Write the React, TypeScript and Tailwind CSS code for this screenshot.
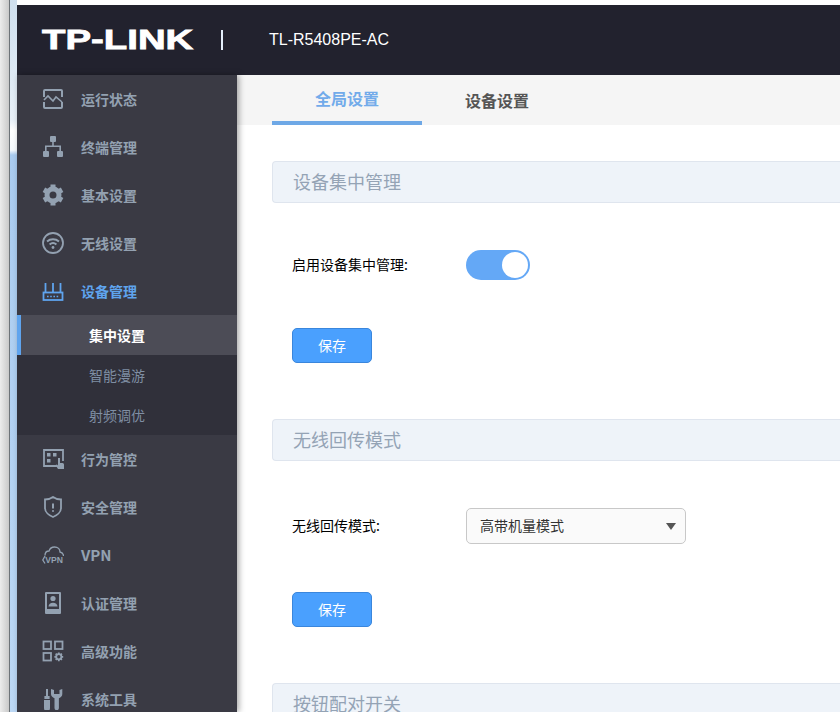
import type { ReactNode } from 'react';

const ico = 'w-[22px] h-[22px] shrink-0';

const StatusIcon = () => (
  <svg viewBox="0 0 22 22" className={ico} fill="none" stroke="currentColor" strokeWidth="2">
    <path d="M2 9V3a1 1 0 0 1 1-1h16a1 1 0 0 1 1 1v6M2 14v5a1 1 0 0 0 1 1h16a1 1 0 0 0 1-1v-5" />
    <path d="M2 12l4-4 5 5 3-4 6 5" strokeWidth="1.6" />
  </svg>
);

const TreeIcon = () => (
  <svg viewBox="0 0 22 22" className={ico} fill="currentColor">
    <rect x="8" y="0" width="6" height="6" rx="1" />
    <rect x="1" y="15" width="6" height="6" rx="1" />
    <rect x="15" y="15" width="6" height="6" rx="1" />
    <path d="M10.200 6h1.600v3.400H19V15h-1.600v-4H4.600v4H3V9.400h7.200z" />
  </svg>
);

const GearIcon = () => (
  <svg viewBox="0 0 22 22" className={ico} fill="none" stroke="currentColor">
    <circle cx="11" cy="11" r="6" strokeWidth="5" />
    <path d="M11 0.500v4M11 17.500v4M1.900 5.750l3.500 2M16.600 14.250l3.500 2M1.900 16.250l3.500-2M16.600 7.750l3.500-2" strokeWidth="5" />
  </svg>
);

const WifiIcon = () => (
  <svg viewBox="0 0 22 22" className={ico} fill="none" stroke="currentColor" strokeWidth="1.800">
    <circle cx="11" cy="11" r="10" />
    <path d="M5 9.500c3.500-3 8.500-3 12 0M7.600 12.400c2-1.700 4.800-1.700 6.800 0" strokeWidth="2" />
    <circle cx="11" cy="15.500" r="1.400" fill="currentColor" stroke="none" />
  </svg>
);

const RouterIcon = () => (
  <svg viewBox="0 0 22 22" className={ico} fill="none" stroke="currentColor" strokeWidth="1.800">
    <rect x="1.500" y="12.500" width="19" height="7.500" />
    <path d="M3.500 12.500V3M11 12.500V3M18.500 12.500V3" />
    <path d="M5 16.500h1.600M8.200 16.500h1.600M11.400 16.500h1.600M14.600 16.500h1.600" strokeWidth="1.500" />
  </svg>
);

const BehaviorIcon = () => (
  <svg viewBox="0 0 22 22" className={ico} fill="none" stroke="currentColor" strokeWidth="1.800">
    <path d="M15 18H2V2h19v11" />
    <g fill="currentColor" stroke="none">
      <rect x="5" y="5" width="3.500" height="3.500" />
      <rect x="11" y="5" width="3.500" height="3.500" />
      <rect x="5" y="11" width="3.500" height="3.500" />
      <path d="M16 10h2v5h2.500a1.500 1.500 0 0 1 1.500 1.500V21h-6l-2.500-4 1.500-.5 1 1z" />
    </g>
  </svg>
);

const ShieldIcon = () => (
  <svg viewBox="0 0 22 22" className={ico} fill="none" stroke="currentColor" strokeWidth="1.800">
    <path d="M3 3.500C7 3.500 9 2.500 11 1c2 1.500 4 2.500 8 2.500V12c0 4-4 7.500-8 9-4-1.500-8-5-8-9z" />
    <path d="M11 7.500v5" strokeWidth="2" />
    <circle cx="11" cy="15" r="1" fill="currentColor" stroke="none" />
  </svg>
);

const VpnIcon = () => (
  <svg viewBox="0 0 22 22" className={ico} fill="none" stroke="currentColor" strokeWidth="1.300">
    <path d="M3 11.500C3 8.500 5 7 7 7c1-3 3-4 5.500-4C16 3 18 5.500 18 8c2 .5 3.500 2 3.500 4" />
    <path d="M3 12 .8 16 3 19.500" />
    <text x="3.200" y="19.300" fontSize="8.600" fontWeight="700" fill="currentColor" stroke="none" fontFamily="'Liberation Sans', sans-serif">VPN</text>
  </svg>
);

const AuthIcon = () => (
  <svg viewBox="0 0 22 22" className={ico} fill="currentColor">
    <path
      fillRule="evenodd"
      d="M4 0h14a1 1 0 0 1 1 1v20a1 1 0 0 1-1 1H4a1 1 0 0 1-1-1V1a1 1 0 0 1 1-1zm1 2v15h12V2z"
    />
    <circle cx="11" cy="6.500" r="2.600" />
    <path d="M6.500 14.500c0-2.500 2-3.800 4.500-3.800s4.500 1.300 4.500 3.800z" />
  </svg>
);

const AppsIcon = () => (
  <svg viewBox="0 0 22 22" className={ico} fill="none" stroke="currentColor" strokeWidth="1.800">
    <rect x="1.500" y="1.500" width="7.500" height="7.500" />
    <rect x="13" y="1.500" width="7.500" height="7.500" />
    <rect x="1.500" y="13" width="7.500" height="7.500" />
    <circle cx="16.800" cy="16.800" r="2.600" />
    <path d="M16.800 12.400v1.800M16.800 19.400v1.800M12.400 16.800h1.800M19.400 16.800h1.800M13.700 13.700l1.200 1.200M18.700 18.700l1.200 1.200M13.700 19.900l1.200-1.200M18.700 14.900l1.200-1.200" />
  </svg>
);

const ToolsIcon = () => (
  <svg viewBox="0 0 22 22" className={ico} fill="currentColor">
    <path d="M4 1h2v7h1.600v3H2.400V8H4z" />
    <path d="M2 12h6v8a3 3 0 0 1-6 0z" />
    <path d="M9 1v5c0 2 1.500 3.500 3.500 4.300V20a2.200 2.200 0 0 0 4.400 0V10.300C19 9.500 20.300 8 20.300 6V1l-2.800 1v4h-5.500V2z" />
  </svg>
);

type Item = { label: string; icon: ReactNode; active?: boolean };

const topItems: Item[] = [
  { label: '运行状态', icon: <StatusIcon /> },
  { label: '终端管理', icon: <TreeIcon /> },
  { label: '基本设置', icon: <GearIcon /> },
  { label: '无线设置', icon: <WifiIcon /> },
  { label: '设备管理', icon: <RouterIcon />, active: true },
];

const bottomItems: Item[] = [
  { label: '行为管控', icon: <BehaviorIcon /> },
  { label: '安全管理', icon: <ShieldIcon /> },
  { label: 'VPN', icon: <VpnIcon /> },
  { label: '认证管理', icon: <AuthIcon /> },
  { label: '高级功能', icon: <AppsIcon /> },
  { label: '系统工具', icon: <ToolsIcon /> },
];

const NavRow = ({ item }: { item: Item }) => (
  <div className={`flex h-12 shrink-0 items-center gap-[17px] pl-[25px] ${item.active ? 'text-[#5fa4ee]' : 'text-[#93a1b1]'}`}>
    {item.icon}
    <span className={item.label === 'VPN' ? 'text-[15px] font-bold' : 'pb-px text-sm font-semibold'}>{item.label}</span>
  </div>
);

const SectionTitle = ({ title }: { title: string }) => (
  <div className="h-[42px] w-[640px] shrink-0 rounded-l border border-r-0 border-[#dfe5ee] bg-[#eef3f9] pl-5 text-lg leading-[38px] text-[#94a3b5]">
    {title}
  </div>
);

const SaveButton = () => (
  <button className="h-[35px] w-20 rounded-[5px] border border-[#3a86dc] bg-[#4aa0fe] pb-[2px] text-sm text-white">保存</button>
);

export default function App() {
  return (
    <div className="flex h-[712px] w-[840px] overflow-hidden bg-white font-['Noto_Sans_CJK_SC','Liberation_Sans',sans-serif]">
      {/* window edge on the left */}
      <div className="w-[9px] shrink-0 bg-[linear-gradient(to_right,#ececec,#c9c9c9)]" />
      <div className="w-px shrink-0 bg-[#6d7378]" />
      <div className="w-[7px] shrink-0 bg-[linear-gradient(to_bottom,#cfdfee_0px,#e8f0f8_120px,#ffffff_130px,#f6fafe_150px,#a9cbf0_155px,#bcd8f5_712px)]" />

      <div className="flex min-w-0 flex-1 flex-col">
        <div className="h-[5px] shrink-0 bg-white" />
        <header className="flex h-[70px] shrink-0 items-center bg-[#22222e] pl-[25px] text-white">
          <span className="w-[152px] origin-left scale-x-[1.37] font-['Liberation_Sans',sans-serif] text-[28px] leading-none font-bold [-webkit-text-stroke:0.8px_white]">TP-LINK</span>
          <div className="ml-[27px] h-5 w-[2px] bg-[#e4eefa]" />
          <span className="ml-[46px] font-['Liberation_Sans',sans-serif] text-base">TL-R5408PE-AC</span>
        </header>

        <div className="flex min-h-0 flex-1">
          <aside className="relative z-10 flex w-[220px] shrink-0 flex-col bg-[#3a3a44] shadow-[2px_0_6px_rgba(0,0,0,0.35)]">
            {topItems.map((item) => (
              <NavRow key={item.label} item={item} />
            ))}
            <div className="flex h-10 shrink-0 items-center border-l-[4px] border-[#5fa4ee] bg-[#4c4c56] pb-px pl-[68px] text-sm font-semibold text-white">集中设置</div>
            <div className="flex h-10 shrink-0 items-center bg-[#30303a] pb-px pl-[72px] text-sm text-[#7f8ea3]">智能漫游</div>
            <div className="flex h-10 shrink-0 items-center bg-[#30303a] pb-px pl-[72px] text-sm text-[#7f8ea3]">射频调优</div>
            {bottomItems.map((item) => (
              <NavRow key={item.label} item={item} />
            ))}
          </aside>

          <main className="flex min-w-0 flex-1 flex-col">
            <div className="flex h-[50px] shrink-0 bg-[#f5f5f5] pl-[35px] text-base font-bold">
              <div className="flex w-[150px] items-center justify-center border-b-4 border-[#6ea8e6] text-[#72abea]">全局设置</div>
              <div className="flex w-[150px] items-center justify-center text-[#555555]">设备设置</div>
            </div>

            <div className="flex flex-col pl-[35px] pt-9">
              <SectionTitle title="设备集中管理" />
              <div className="mt-[47px] flex h-[30px] items-center pl-5">
                <span className="w-[174px] pb-[2px] text-sm text-black">启用设备集中管理:</span>
                <div className="flex h-[30px] w-16 items-center justify-end rounded-full bg-[#64a8f6] pr-[2px]">
                  <div className="h-[26px] w-[26px] rounded-full bg-white" />
                </div>
              </div>
              <div className="mt-12 pl-5">
                <SaveButton />
              </div>

              <div className="mt-14">
                <SectionTitle title="无线回传模式" />
              </div>
              <div className="mt-[47px] flex h-9 items-center pl-5">
                <span className="w-[174px] pb-[2px] text-sm text-black">无线回传模式:</span>
                <div className="flex h-9 w-[220px] items-center justify-between rounded-[5px] border border-[#c8c8c8] bg-[#fafafa] pr-[9px] pl-[13px] text-sm text-[#333333]">
                  <span className="pb-[2px]">高带机量模式</span>
                  <svg viewBox="0 0 10 7" className="h-[7px] w-[10px]" fill="#555555">
                    <path d="M0 0h10L5 7z" />
                  </svg>
                </div>
              </div>
              <div className="mt-12 pl-5">
                <SaveButton />
              </div>

              <div className="mt-14">
                <SectionTitle title="按钮配对开关" />
              </div>
            </div>
          </main>
        </div>
      </div>
    </div>
  );
}
